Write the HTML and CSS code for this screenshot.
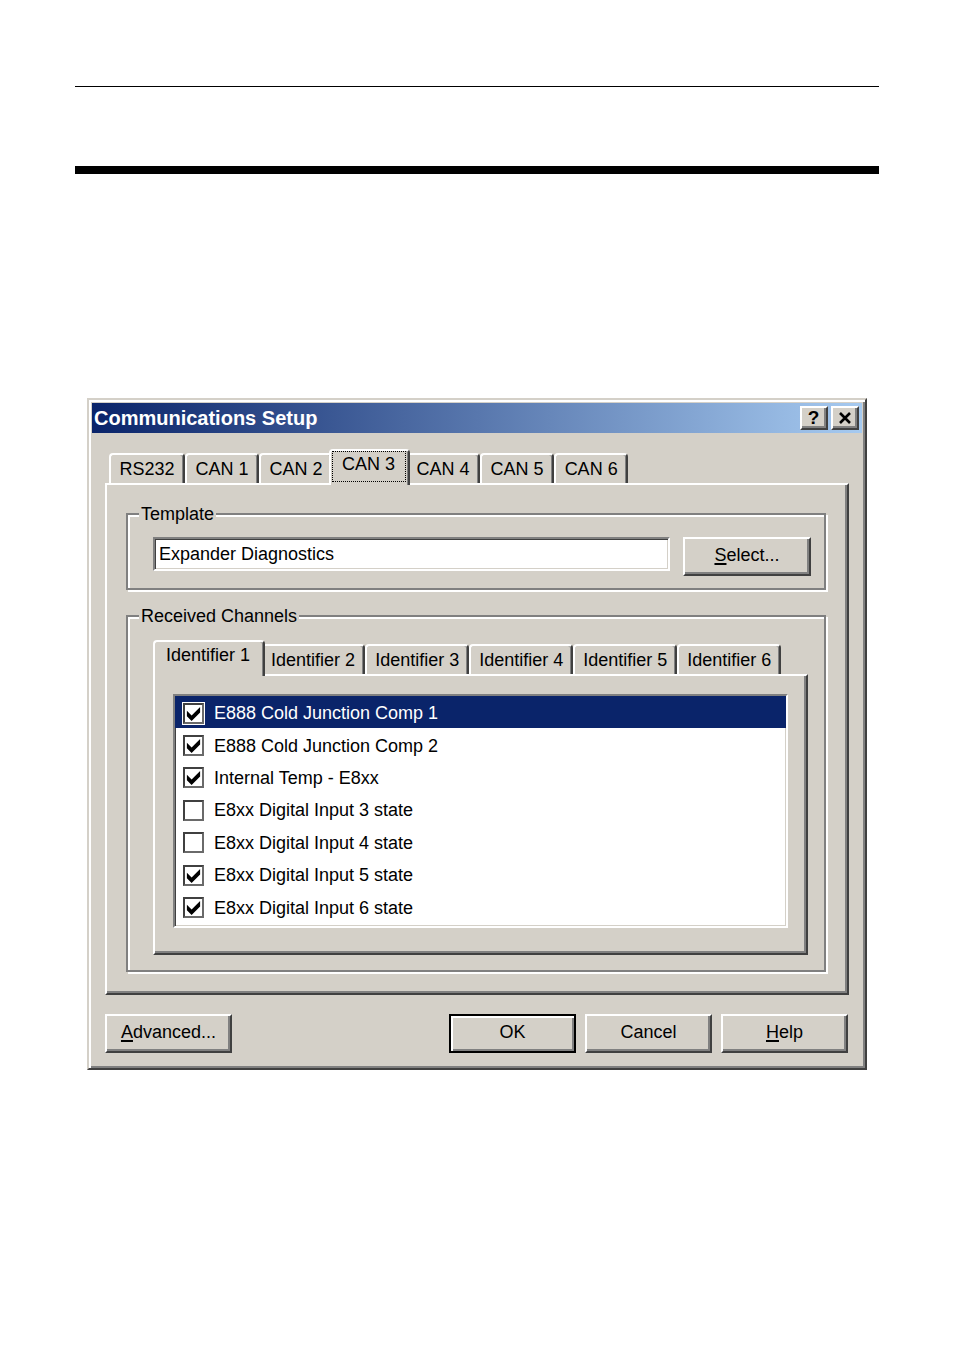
FILE: index.html
```html
<!DOCTYPE html>
<html lang="en">
<head>
<meta charset="utf-8">
<title>Communications Setup</title>
<link rel="stylesheet" href="styles.css">
</head>
<body>
<div class="page">
  <div class="rule-thin"></div>
  <div class="rule-thick"></div>

  <div class="dialog">
    <div class="titlebar">
      <span class="title">Communications Setup</span>
      <div class="title-btns">
        <span class="tbtn">?</span>
        <span class="tbtn">
          <svg class="x-icon" width="14" height="12" viewBox="0 0 14 12"><path d="M2 1 L12 11 M12 1 L2 11" stroke="#000" stroke-width="2.6" fill="none"/></svg>
        </span>
      </div>
    </div>

    <div class="tabs outer-tabs">
      <div class="tab">RS232</div>
      <div class="tab">CAN 1</div>
      <div class="tab">CAN 2</div>
      <div class="tab sel"><span class="focus">CAN 3</span></div>
      <div class="tab">CAN 4</div>
      <div class="tab">CAN 5</div>
      <div class="tab">CAN 6</div>
    </div>

    <div class="panel">
      <fieldset class="group group-template">
        <legend>Template</legend>
        <div class="template-row">
          <div class="textbox">Expander Diagnostics</div>
          <button class="btn btn-select" type="button"><u>S</u>elect...</button>
        </div>
      </fieldset>

      <fieldset class="group group-channels">
        <legend>Received Channels</legend>
        <div class="tabs inner-tabs">
          <div class="tab sel"><span class="focus off">Identifier 1</span></div>
          <div class="tab">Identifier 2</div>
          <div class="tab">Identifier 3</div>
          <div class="tab">Identifier 4</div>
          <div class="tab">Identifier 5</div>
          <div class="tab">Identifier 6</div>
        </div>
        <div class="panel inner-panel">
          <div class="listbox">
            <div class="item sel">
              <span class="cb"><svg class="check" viewBox="-1 -1 9 9"><polygon points="0,2 2.5,4.5 7,0 7,3 2.5,7.5 0,5"/></svg></span>
              <span class="label">E888 Cold Junction Comp 1</span>
            </div>
            <div class="item">
              <span class="cb"><svg class="check" viewBox="-1 -1 9 9"><polygon points="0,2 2.5,4.5 7,0 7,3 2.5,7.5 0,5"/></svg></span>
              <span class="label">E888 Cold Junction Comp 2</span>
            </div>
            <div class="item">
              <span class="cb"><svg class="check" viewBox="-1 -1 9 9"><polygon points="0,2 2.5,4.5 7,0 7,3 2.5,7.5 0,5"/></svg></span>
              <span class="label">Internal Temp - E8xx</span>
            </div>
            <div class="item">
              <span class="cb"></span>
              <span class="label">E8xx Digital Input 3 state</span>
            </div>
            <div class="item">
              <span class="cb"></span>
              <span class="label">E8xx Digital Input 4 state</span>
            </div>
            <div class="item">
              <span class="cb"><svg class="check" viewBox="-1 -1 9 9"><polygon points="0,2 2.5,4.5 7,0 7,3 2.5,7.5 0,5"/></svg></span>
              <span class="label">E8xx Digital Input 5 state</span>
            </div>
            <div class="item">
              <span class="cb"><svg class="check" viewBox="-1 -1 9 9"><polygon points="0,2 2.5,4.5 7,0 7,3 2.5,7.5 0,5"/></svg></span>
              <span class="label">E8xx Digital Input 6 state</span>
            </div>
          </div>
        </div>
      </fieldset>
    </div>

    <div class="footer">
      <button class="btn" type="button"><u>A</u>dvanced...</button>
      <span class="spacer"></span>
      <button class="btn btn-default" type="button">OK</button>
      <button class="btn" type="button">Cancel</button>
      <button class="btn" type="button"><u>H</u>elp</button>
    </div>
  </div>
</div>
</body>
</html>
```

FILE: styles.css
```css
* { box-sizing: border-box; }

html, body {
  margin: 0;
  padding: 0;
  background: #fff;
}

body {
  font-family: "Liberation Sans", Arial, sans-serif;
  font-size: 18px;
  line-height: 24px;
  color: #000;
}

.page {
  padding-top: 86px;
  padding-bottom: 200px;
}

.rule-thin {
  margin-left: 75px;
  width: 804px;
  height: 1px;
  background: #000;
}

.rule-thick {
  margin: 79px 0 0 75px;
  width: 804px;
  height: 8px;
  background: #000;
}

/* ---------- dialog frame ---------- */
.dialog {
  margin: 224px 0 0 87px;
  width: 780px;
  background: #d4d0c8;
  border: 2px solid;
  border-color: #d4d0c8 #404040 #404040 #d4d0c8;
  box-shadow: inset 2px 2px 0 #fff, inset -2px -2px 0 #808080;
  padding: 3px;
}

.titlebar {
  height: 30px;
  display: flex;
  align-items: center;
  justify-content: space-between;
  background: linear-gradient(to right, #0a246a 0%, #a6caf0 100%);
  padding: 0 3px 0 2px;
}

.title {
  font-family: "Liberation Sans", Arial, sans-serif;
  font-weight: bold;
  font-size: 20px;
  line-height: 30px;
  color: #fff;
}

.title-btns {
  display: flex;
  gap: 3px;
}

.tbtn {
  width: 28px;
  height: 24px;
  display: flex;
  align-items: center;
  justify-content: center;
  background: #d4d0c8;
  border: 2px solid;
  border-color: #fff #404040 #404040 #fff;
  box-shadow: inset -2px -2px 0 #808080;
  font-family: "Liberation Sans", Arial, sans-serif;
  font-weight: bold;
  font-size: 19px;
  line-height: 20px;
  padding-right: 1px;
}

.x-icon { display: block; }

/* ---------- tabs ---------- */
.tabs {
  display: flex;
  align-items: flex-end;
  height: 34px;
  padding-left: 4px;
}

.outer-tabs {
  margin: 16px 13px 0 13px;
}

.tab {
  height: 30px;
  padding: 2px 8.5px 2px 8.5px;
  border: 2px solid;
  border-bottom: 0;
  border-color: #fff #404040 transparent #fff;
  border-radius: 4px 4px 0 0;
  box-shadow: inset -1px 0 0 #808080;
  background: #d4d0c8;
  white-space: nowrap;
}

.inner-tabs .tab {
  padding-left: 8px;
  padding-right: 8px;
}

.tab.sel,
.inner-tabs .tab.sel {
  height: 36px;
  margin: 0 -4px -2px -4px;
  padding: 0 2px 3px 1px;
  position: relative;
  z-index: 1;
}

.focus {
  display: block;
  height: 31px;
  border: 1px dotted #000;
  padding: 0 10px 5px 9px;
}

.focus.off { border-color: transparent; }

.group-channels .inner-tabs {
  margin-left: 14px;
}

/* ---------- panels ---------- */
.panel {
  margin: 0 13px;
  border: 2px solid;
  border-color: #fff #404040 #404040 #fff;
  box-shadow: inset -2px -2px 0 #808080;
  padding: 17px 21px 21px 19px;
}

.inner-panel {
  margin: 0 3px 0 14px;
  padding: 18px 18px 25px 18px;
  height: 281px;
}

/* ---------- group boxes ---------- */
.group {
  margin: 0;
  min-inline-size: 0;
  border: 2px solid #808080;
  box-shadow: inset 2px 2px 0 #fff, 2px 2px 0 #fff;
  padding: 11px 13px 12px 11px;
}

.group legend {
  padding: 0 2px;
  height: 24px;
  line-height: 24px;
  background: #d4d0c8;
}

.group-channels {
  margin-top: 14px;
  padding-top: 12px;
  padding-bottom: 15px;
}

.template-row {
  display: flex;
  align-items: flex-start;
  gap: 13px;
  margin-left: 14px;
}

.textbox {
  flex: 1;
  height: 34px;
  background: #fff;
  border: 2px solid;
  border-color: #808080 #fff #fff #808080;
  box-shadow: inset 1px 1px 0 #404040, inset -1px -1px 0 #d4d0c8;
  padding: 3px 4px 0 4px;
  white-space: nowrap;
}

/* ---------- buttons ---------- */
.btn {
  width: 127px;
  height: 39px;
  background: #d4d0c8;
  border: 2px solid;
  border-color: #fff #404040 #404040 #fff;
  box-shadow: inset -2px -2px 0 #808080;
  font: inherit;
  line-height: 24px;
  color: #000;
  padding: 0 0 3px 0;
  text-align: center;
}

.btn u {
  text-decoration-thickness: 2px;
  text-underline-offset: 2px;
}

.btn-select { width: 128px; }

.btn-default {
  border-color: #000;
  box-shadow: inset 2px 2px 0 #fff, inset -2px -2px 0 #808080;
}

.footer {
  display: flex;
  gap: 9px;
  margin: 19px 14px 12px 13px;
}

.footer .spacer { flex: 1; }

/* ---------- list box ---------- */
.listbox {
  height: 234px;
  background: #fff;
  border: 2px solid;
  border-color: #808080 #fff #fff #808080;
  box-shadow: inset 1px 1px 0 #404040, inset -1px -1px 0 #d4d0c8;
}

.item {
  height: 32.4px;
  display: flex;
  align-items: center;
  padding: 2px 0 0 8px;
  white-space: nowrap;
}

.item.sel {
  background: #0a246a;
  color: #fff;
}

.cb {
  width: 21px;
  height: 21px;
  flex: none;
  background: #fff;
  border: 2px solid;
  border-color: #404040 #6a6a6a #6a6a6a #404040;
  box-shadow: 0 0 0 1px #fff;
}

.check {
  display: block;
  width: 17px;
  height: 17px;
  fill: #000;
}

.label {
  margin-left: 10px;
}
```
